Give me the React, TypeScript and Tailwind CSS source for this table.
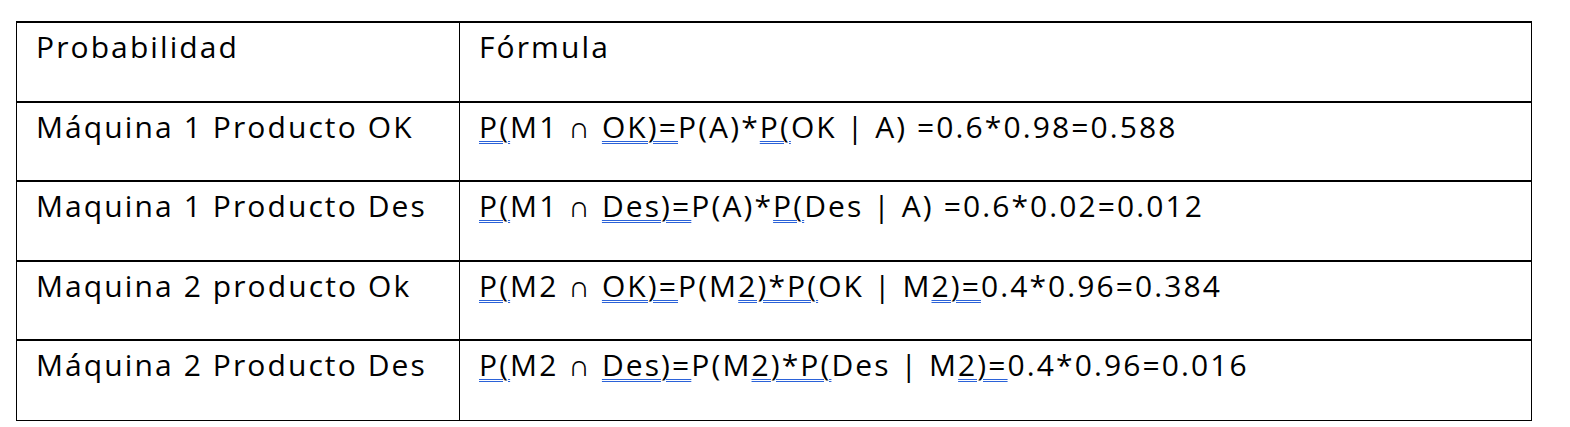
import React from "react";

type Seg = { t: string; u?: boolean };

const rows: { label: string; h: string; formula: Seg[] }[] = [
  {
    label: "Máquina 1 Producto OK",
    h: "h-[79px] border-b-2",
    formula: [
      { t: "P(", u: true },
      { t: "M1 ∩ " },
      { t: "OK)=", u: true },
      { t: "P(A)*" },
      { t: "P(", u: true },
      { t: "OK | A) =0.6*0.98=0.588" },
    ],
  },
  {
    label: "Maquina 1 Producto Des",
    h: "h-[80px] border-b-2",
    formula: [
      { t: "P(", u: true },
      { t: "M1 ∩ " },
      { t: "Des)=", u: true },
      { t: "P(A)*" },
      { t: "P(", u: true },
      { t: "Des | A) =0.6*0.02=0.012" },
    ],
  },
  {
    label: "Maquina 2 producto Ok",
    h: "h-[79px] border-b-2",
    formula: [
      { t: "P(", u: true },
      { t: "M2 ∩ " },
      { t: "OK)=", u: true },
      { t: "P(M" },
      { t: "2)*P(", u: true },
      { t: "OK | M" },
      { t: "2)=", u: true },
      { t: "0.4*0.96=0.384" },
    ],
  },
  {
    label: "Máquina 2 Producto Des",
    h: "h-[79px]",
    formula: [
      { t: "P(", u: true },
      { t: "M2 ∩ " },
      { t: "Des)=", u: true },
      { t: "P(M" },
      { t: "2)*P(", u: true },
      { t: "Des | M" },
      { t: "2)=", u: true },
      { t: "0.4*0.96=0.016" },
    ],
  },
];

function Cell({ children, first }: { children: React.ReactNode; first?: boolean }) {
  return (
    <div
      className={
        "h-full pl-[19px] pt-[4px] text-[30px] leading-[40px] tracking-[2.1px] text-black " +
        (first ? "border-r border-black" : "")
      }
    >
      {children}
    </div>
  );
}

export default function App() {
  return (
    <div className="w-[1570px] h-[427px] bg-white pt-[21px] pl-[16px] font-['Open_Sans',sans-serif]">
      <div className="w-[1516px] border-x border-black border-t-2 border-b-[1.5px]">
        <div className="grid grid-cols-[443px_1fr] h-[80px] border-b-2 border-black">
          <Cell first>Probabilidad</Cell>
          <Cell>Fórmula</Cell>
        </div>
        {rows.map((r, i) => (
          <div key={i} className={"grid grid-cols-[443px_1fr] border-black " + r.h}>
            <Cell first>{r.label}</Cell>
            <Cell>
              {r.formula.map((s, j) =>
                s.u ? (
                  <span
                    key={j}
                    className="underline decoration-double decoration-[#2b62d8] decoration-1 underline-offset-[3px]"
                  >
                    {s.t}
                  </span>
                ) : (
                  <span key={j}>{s.t}</span>
                )
              )}
            </Cell>
          </div>
        ))}
      </div>
    </div>
  );
}
